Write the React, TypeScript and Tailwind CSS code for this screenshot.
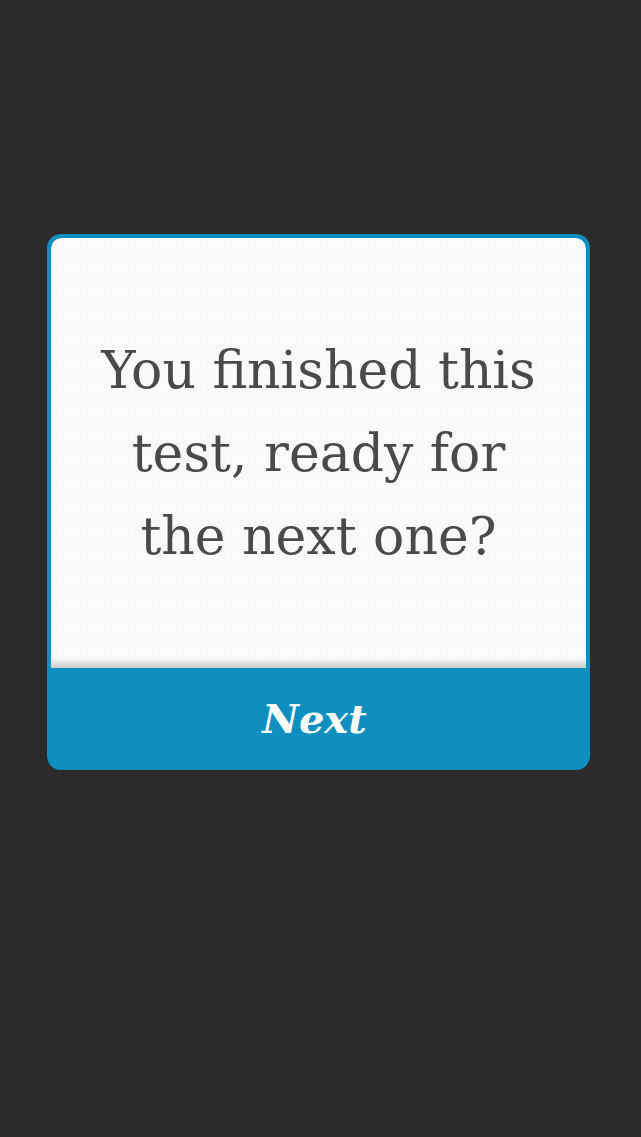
export default function App() {
  return (
    <div className="min-h-[1137px] bg-[#2b2b2b] pt-[234px]">
      <div className="ml-[47px] mr-[51px] overflow-hidden rounded-[14px] border-4 border-b-0 border-[#0e8fc0] bg-[#0e8fc0]">
        <div className="relative flex h-[430px] items-center justify-center rounded-t-[10px] bg-[#f9f9f9] bg-[radial-gradient(circle,#ffffff_1.5px,transparent_1.6px)] bg-[length:6px_6px]">
          <p className="px-4 text-center font-['DejaVu_Serif',serif] text-[52px] leading-[83px] text-[#4a4a4a]">
            You finished this
            <br />
            test, ready for
            <br />
            the next one?
          </p>
          <div className="absolute inset-x-0 bottom-0 h-[10px] bg-gradient-to-b from-transparent to-[#c8c8c8]" />
        </div>
        <button className="flex h-[102px] w-full items-center justify-center border-b border-dotted border-[#0b6f96] bg-[#0e8fc0] pr-2 font-['DejaVu_Serif',serif] text-[40px] font-bold italic text-white">
          Next
        </button>
      </div>
    </div>
  );
}
